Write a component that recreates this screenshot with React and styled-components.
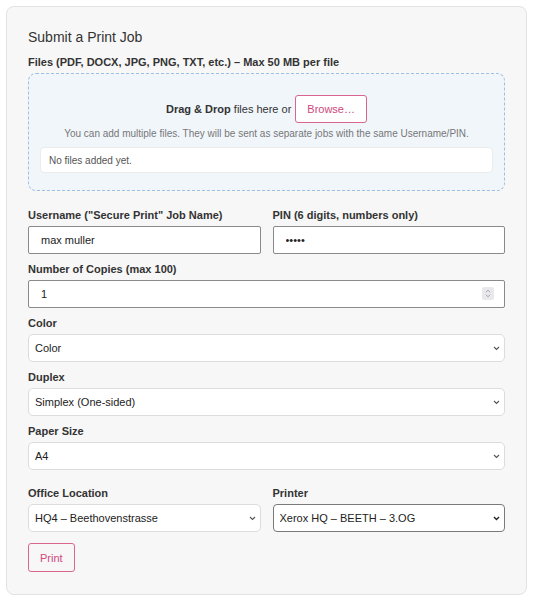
import React, { useState } from 'react';
import styled, { createGlobalStyle } from 'styled-components';

const GlobalStyle = createGlobalStyle`
  * { box-sizing: border-box; }
  body {
    margin: 0;
    background: #ffffff;
    font-family: "Liberation Sans", Arial, sans-serif;
    color: #333;
  }
`;

const Page = styled.div`
  padding: 6px;
`;

const Card = styled.form`
  background: #f7f7f7;
  border: 1px solid #e2e2e2;
  border-radius: 8px;
  padding: 20px 21px 22px;
  width: 521px;
`;

const Title = styled.h2`
  margin: 0 0 8px;
  font-size: 14px;
  line-height: 20px;
  font-weight: 400;
  color: #333;
`;

const Label = styled.label`
  display: block;
  font-size: 11px;
  line-height: 14px;
  font-weight: 700;
  color: #333;
  margin-bottom: 4px;
`;

const Field = styled.div`
  margin-bottom: ${(p) => p.$mb ?? 8}px;
  min-width: 0;
`;

const Row = styled.div`
  display: grid;
  grid-template-columns: 1fr 1fr;
  gap: 12px;
  margin-top: ${(p) => p.$mt ?? 0}px;
`;

const DropZone = styled.div`
  border: 1.5px dashed #9dbfe3;
  border-radius: 8px;
  background: #f1f6fb;
  padding: 21px 11px 17px;
  margin-bottom: 17px;
  text-align: center;
`;

const DropLine = styled.div`
  display: flex;
  justify-content: center;
  align-items: center;
  gap: 4px;
  font-size: 11px;
  color: #333;
`;

const Browse = styled.button`
  height: 28px;
  padding: 0 11px;
  border: 1px solid #d9668f;
  border-radius: 3px;
  background: #ffffff;
  color: #d0487c;
  font-family: inherit;
  font-size: 11px;
  cursor: pointer;
`;

const Hint = styled.p`
  margin: 4px 0 7px;
  font-size: 10px;
  line-height: 13px;
  color: #777;
`;

const FileList = styled.div`
  background: #ffffff;
  border: 1px solid #ececec;
  border-radius: 4px;
  height: 26px;
  padding: 0 8px;
  display: flex;
  align-items: center;
  font-size: 10px;
  color: #555;
  text-align: left;
`;

const TextInput = styled.input`
  display: block;
  width: 100%;
  height: 28px;
  padding: 0 12px;
  border: 1px solid #8a8a8a;
  border-radius: 2px;
  background: #ffffff;
  font-family: inherit;
  font-size: 11px;
  color: #222;
  outline: none;
`;

const Wrap = styled.div`
  position: relative;
`;

const Spinner = styled.span`
  position: absolute;
  right: 11px;
  top: 7px;
  width: 12px;
  height: 13px;
  background: #e9e9ed;
  border-radius: 2px;
  display: flex;
  align-items: center;
  justify-content: center;
`;

const Select = styled.select`
  display: block;
  width: 100%;
  height: 28px;
  padding: 0 20px 0 6px;
  border: 1px solid ${(p) => (p.$strong ? '#7a7a7a' : '#dcdcdc')};
  border-radius: ${(p) => (p.$strong ? 4 : 5)}px;
  background: #ffffff;
  font-family: inherit;
  font-size: 11px;
  color: #222;
  appearance: none;
  outline: none;
`;

const Chevron = styled.svg`
  position: absolute;
  right: 5px;
  top: 12px;
  pointer-events: none;
`;

const PrintButton = styled.button`
  margin-top: 11px;
  height: 29px;
  padding: 0 11px;
  border: 1px solid #d9668f;
  border-radius: 3px;
  background: transparent;
  color: #d0487c;
  font-family: inherit;
  font-size: 11px;
  cursor: pointer;
`;

const SelectBox = ({ strong, options, value, onChange }) => (
  <Wrap>
    <Select $strong={strong} value={value} onChange={(e) => onChange(e.target.value)}>
      {options.map((o) => (
        <option key={o}>{o}</option>
      ))}
    </Select>
    <Chevron width="7" height="5" viewBox="0 0 7 5">
      <path d="M1 1l2.5 2.5L6 1" fill="none" stroke={strong ? '#222' : '#555'} strokeWidth={strong ? 1.4 : 1.1} />
    </Chevron>
  </Wrap>
);

const App = () => {
  const [username, setUsername] = useState('max muller');
  const [pin, setPin] = useState('12345');
  const [copies, setCopies] = useState('1');
  const [color, setColor] = useState('Color');
  const [duplex, setDuplex] = useState('Simplex (One-sided)');
  const [paper, setPaper] = useState('A4');
  const [office, setOffice] = useState('HQ4 – Beethovenstrasse');
  const [printer, setPrinter] = useState('Xerox HQ – BEETH – 3.OG');

  return (
    <Page>
      <GlobalStyle />
      <Card onSubmit={(e) => e.preventDefault()}>
        <Title>Submit a Print Job</Title>

        <Label>Files (PDF, DOCX, JPG, PNG, TXT, etc.) – Max 50 MB per file</Label>
        <DropZone>
          <DropLine>
            <span>
              <b>Drag &amp; Drop</b> files here or
            </span>
            <Browse type="button">Browse…</Browse>
          </DropLine>
          <Hint>You can add multiple files. They will be sent as separate jobs with the same Username/PIN.</Hint>
          <FileList>No files added yet.</FileList>
        </DropZone>

        <Row>
          <Field>
            <Label>Username ("Secure Print" Job Name)</Label>
            <TextInput value={username} onChange={(e) => setUsername(e.target.value)} />
          </Field>
          <Field>
            <Label>PIN (6 digits, numbers only)</Label>
            <TextInput type="password" value={pin} onChange={(e) => setPin(e.target.value)} />
          </Field>
        </Row>

        <Field>
          <Label>Number of Copies (max 100)</Label>
          <Wrap>
            <TextInput value={copies} onChange={(e) => setCopies(e.target.value)} />
            <Spinner>
              <svg width="6" height="9" viewBox="0 0 6 9">
                <path d="M1 3.2l2-2 2 2M1 5.8l2 2 2-2" fill="none" stroke="#9a9a9a" strokeWidth="0.9" />
              </svg>
            </Spinner>
          </Wrap>
        </Field>

        <Field>
          <Label>Color</Label>
          <SelectBox options={['Color', 'Black & White']} value={color} onChange={setColor} />
        </Field>

        <Field>
          <Label>Duplex</Label>
          <SelectBox
            options={['Simplex (One-sided)', 'Duplex (Long edge)', 'Duplex (Short edge)']}
            value={duplex}
            onChange={setDuplex}
          />
        </Field>

        <Field>
          <Label>Paper Size</Label>
          <SelectBox options={['A4', 'A3', 'Letter']} value={paper} onChange={setPaper} />
        </Field>

        <Row $mt={16}>
          <Field $mb={0}>
            <Label>Office Location</Label>
            <SelectBox options={['HQ4 – Beethovenstrasse']} value={office} onChange={setOffice} />
          </Field>
          <Field $mb={0}>
            <Label>Printer</Label>
            <SelectBox strong options={['Xerox HQ – BEETH – 3.OG']} value={printer} onChange={setPrinter} />
          </Field>
        </Row>

        <PrintButton type="submit">Print</PrintButton>
      </Card>
    </Page>
  );
};

export default App;
